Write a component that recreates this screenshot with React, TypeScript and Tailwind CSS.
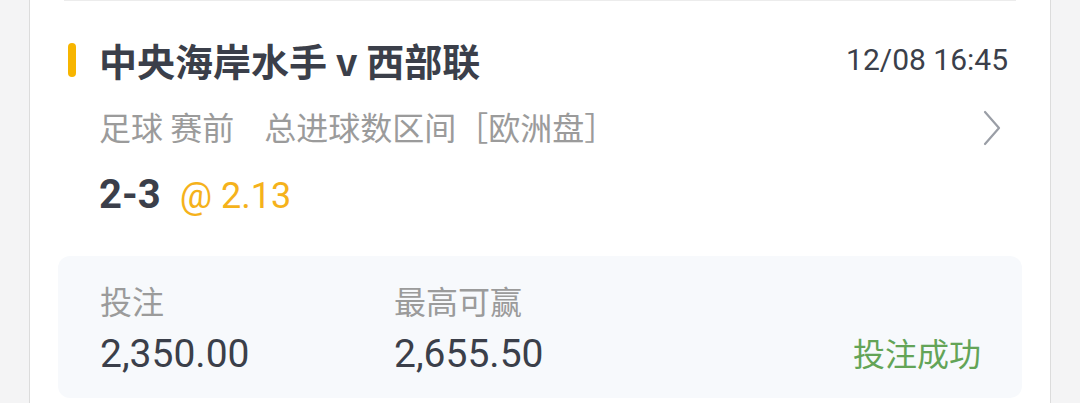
import React from 'react';

const cjk = "font-['Noto_Sans_CJK_SC',sans-serif]";
const num = "font-['Roboto','Noto_Sans_CJK_SC',sans-serif]";

const App = (): JSX.Element => {
  return (
    <div className="flex w-[1080px] h-[403px] bg-[#f4f4f5] overflow-hidden">
      <div className="w-[29px] shrink-0" />
      <div className="w-[1022px] shrink-0 bg-white border-x border-[#dcdcdc] flex flex-col">
        <div className="h-px bg-[#ececec] ml-[34px] mr-[34px]" />

        {/* title row */}
        <div className="flex items-center h-[48px] mt-[35px] pl-[38px] pr-[42px]">
          <div className="w-[8px] h-[34px] rounded-full bg-[#f7b500]" />
          <div className={`${cjk} ml-[23px] text-[38px] leading-[48px] font-bold text-[#3b3f4a]`}>
            中央海岸水手 v 西部联
          </div>
          <div className={`${num} ml-auto text-[30px] leading-[48px] text-[#3b3f4a]`}>
            12/08 16:45
          </div>
        </div>

        {/* market row */}
        <div className="flex items-center h-[48px] mt-[18px] pl-[69px] pr-[49px]">
          <div className={`${cjk} flex text-[32px] leading-[48px] text-[#9b9b9b]`}>
            <span>足球 赛前</span>
            <span className="ml-[30px]">总进球数区间</span>
            <span>［欧洲盘］</span>
          </div>
          <svg className="ml-auto mt-[4px]" width="18" height="36" viewBox="0 0 18 36">
            <polyline
              points="2,2 16,18 2,34"
              fill="none"
              stroke="#9a9ea6"
              strokeWidth="2.2"
              strokeLinecap="round"
              strokeLinejoin="round"
            />
          </svg>
        </div>

        {/* selection row */}
        <div className={`${num} flex items-baseline h-[48px] mt-[21px] pl-[69px]`}>
          <span className="text-[40px] leading-[48px] font-bold text-[#3b3f4a]">2-3</span>
          <span className="ml-[19px] text-[36px] leading-[48px] text-[#f5b21b]">@ 2.13</span>
        </div>

        {/* stake box */}
        <div className="mt-[37px] ml-[28px] mr-[28px] h-[142px] rounded-[12px] bg-[#f7f9fc] flex items-end pl-[42px] pr-[41px] pb-[22px]">
          <div className="w-[294px] flex flex-col">
            <div className={`${cjk} text-[32px] leading-[40px] text-[#9b9b9b]`}>投注</div>
            <div className={`${num} mt-[12px] text-[39px] leading-[44px] text-[#3b3f4a]`}>2,350.00</div>
          </div>
          <div className="flex flex-col">
            <div className={`${cjk} text-[32px] leading-[40px] text-[#9b9b9b]`}>最高可赢</div>
            <div className={`${num} mt-[12px] text-[39px] leading-[44px] text-[#3b3f4a]`}>2,655.50</div>
          </div>
          <div className={`${cjk} ml-auto text-[32px] leading-[44px] mb-[2px] text-[#63a457]`}>投注成功</div>
        </div>
      </div>
    </div>
  );
};

export default App;
